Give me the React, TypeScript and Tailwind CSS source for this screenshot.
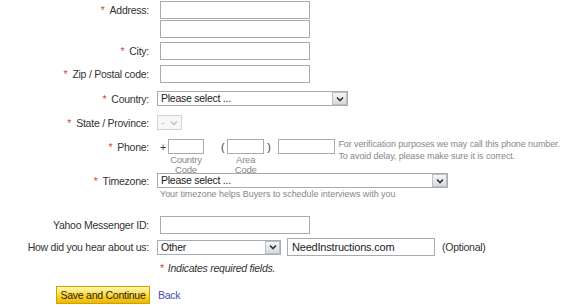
import React from 'react';

const font = { fontFamily: '"Liberation Sans", Arial, sans-serif' };

function Req() {
  return <span className="text-[#d14836] mr-[5px]">*</span>;
}

function Label({ children, req = false }: { children: React.ReactNode; req?: boolean }) {
  return (
    <div className="w-[149px] shrink-0 text-right text-[#333] whitespace-nowrap">
      {req && <Req />}
      {children}
    </div>
  );
}

function TextBox({ w, value }: { w: string; value?: string }) {
  return (
    <div className={`${w} h-[18px] border border-[#a5acb2] bg-white px-[4px] leading-[16px] text-[#222] text-[11px] tracking-[-0.2px]`}>
      {value}
    </div>
  );
}

function Arrow() {
  return (
    <div className="w-[15px] h-[13px] border border-[#b9c0c8] bg-gradient-to-b from-[#f6f6f6] to-[#d9d9d9] flex items-center justify-center">
      <svg width="8" height="6" viewBox="0 0 8 6">
        <path d="M1 1.5 L4 4.5 L7 1.5" stroke="#333" strokeWidth="1.6" fill="none" />
      </svg>
    </div>
  );
}

function Select({ w, text }: { w: string; text: string }) {
  return (
    <div className={`${w} h-[15px] border border-[#a5acb2] bg-white flex items-center justify-between pl-[3px]`}>
      <span className="text-[#222] leading-[13px] text-[10.5px]">{text}</span>
      <Arrow />
    </div>
  );
}

export default function App() {
  return (
    <div className="w-[576px] h-[307px] bg-white text-[10.5px] leading-[12px] tracking-[-0.25px] overflow-hidden" style={font}>
      {/* Address */}
      <div className="flex items-start pt-[1px]">
        <div className="h-[18px] flex items-center"><Label req>Address:</Label></div>
        <div className="ml-[11px] flex flex-col gap-[1px]">
          <TextBox w="w-[150px]" />
          <TextBox w="w-[150px]" />
        </div>
      </div>
      {/* City */}
      <div className="flex items-center mt-[4px] h-[18px]">
        <Label req>City:</Label>
        <div className="ml-[11px]"><TextBox w="w-[150px]" /></div>
      </div>
      {/* Zip */}
      <div className="flex items-center mt-[5px] h-[18px]">
        <Label req>Zip / Postal code:</Label>
        <div className="ml-[11px]"><TextBox w="w-[150px]" /></div>
      </div>
      {/* Country */}
      <div className="flex items-center mt-[8px] h-[15px]">
        <Label req>Country:</Label>
        <div className="ml-[8px]"><Select w="w-[191px]" text="Please select ..." /></div>
      </div>
      {/* State */}
      <div className="flex items-center mt-[9px] h-[15px]">
        <Label req>State / Province:</Label>
        <div className="ml-[8px] w-[25px] h-[15px] border border-[#d4d4d4] bg-[#f7f7f7] flex items-center justify-between pl-[3px]">
          <span className="text-[#bbb] leading-[13px]">-</span>
          <svg width="8" height="6" viewBox="0 0 8 6" className="mr-[3px]">
            <path d="M1 1.5 L4 4.5 L7 1.5" stroke="#c4c4c4" strokeWidth="1.6" fill="none" />
          </svg>
        </div>
      </div>
      {/* Phone */}
      <div className="flex items-start mt-[9px] h-[34px]">
        <div className="h-[15px] flex items-center"><Label req>Phone:</Label></div>
        <div className="ml-[11px] flex items-start text-[#333]">
          <div className="h-[15px] flex items-center mr-[2px]">+</div>
          <div className="w-[36px] flex flex-col items-center">
            <div className="w-[36px] h-[15px] border border-[#a5acb2] bg-white" />
            <div className="text-[#888] text-[9.5px] text-center leading-[10px] mt-[1px]">Country</div>
            <div className="text-[#888] text-[9.5px] text-center leading-[10px]">Code</div>
          </div>
          <div className="h-[15px] flex items-center ml-[17px] mr-[3px]">(</div>
          <div className="w-[37px] flex flex-col items-center">
            <div className="w-[37px] h-[15px] border border-[#a5acb2] bg-white" />
            <div className="text-[#888] text-[9.5px] text-center leading-[10px] mt-[1px]">Area</div>
            <div className="text-[#888] text-[9.5px] text-center leading-[10px]">Code</div>
          </div>
          <div className="h-[15px] flex items-center ml-[3px] mr-[8px]">)</div>
          <div className="w-[57px] h-[15px] border border-[#a5acb2] bg-white" />
          <div className="ml-[3px] text-[#888] text-[9px] leading-[12px] -mt-[1px] whitespace-nowrap tracking-[-0.1px]">
            <div>For verification purposes we may call this phone number.</div>
            <div>To avoid delay, please make sure it is correct.</div>
          </div>
        </div>
      </div>
      {/* Timezone */}
      <div className="flex items-start h-[43px]">
        <div className="h-[15px] flex items-center"><Label req>Timezone:</Label></div>
        <div className="ml-[8px] flex flex-col">
          <Select w="w-[291px]" text="Please select ..." />
          <div className="text-[#888] text-[9px] leading-[12px] ml-[3px] tracking-[-0.05px] whitespace-nowrap">
            Your timezone helps Buyers to schedule interviews with you
          </div>
        </div>
      </div>
      {/* Yahoo */}
      <div className="flex items-center h-[18px]">
        <Label>Yahoo Messenger ID:</Label>
        <div className="ml-[11px]"><TextBox w="w-[150px]" /></div>
      </div>
      {/* Hear */}
      <div className="flex items-center mt-[4px] h-[18px]">
        <Label>How did you hear about us:</Label>
        <div className="ml-[8px] flex items-center">
          <Select w="w-[124px]" text="Other" />
          <div className="ml-[6px]"><TextBox w="w-[148px]" value="NeedInstructions.com" /></div>
          <span className="ml-[7px] text-[#333]">(Optional)</span>
        </div>
      </div>
      {/* Required note */}
      <div className="ml-[160px] mt-[6px] h-[12px] italic text-[#333] whitespace-nowrap">
        <span className="text-[#d14836] mr-[4px] not-italic">*</span>Indicates required fields.
      </div>
      {/* Buttons */}
      <div className="flex items-center ml-[56px] mt-[12px]">
        <button
          className="w-[94px] h-[18px] border border-[#c9a400] bg-gradient-to-b from-[#fff7b0] via-[#ffd92e] to-[#f0b400] text-[#222] leading-[14px] text-[10.5px] tracking-[-0.25px] whitespace-nowrap"
          style={font}
        >
          Save and Continue
        </button>
        <a className="ml-[8px] text-[#4848b8]">Back</a>
      </div>
    </div>
  );
}
